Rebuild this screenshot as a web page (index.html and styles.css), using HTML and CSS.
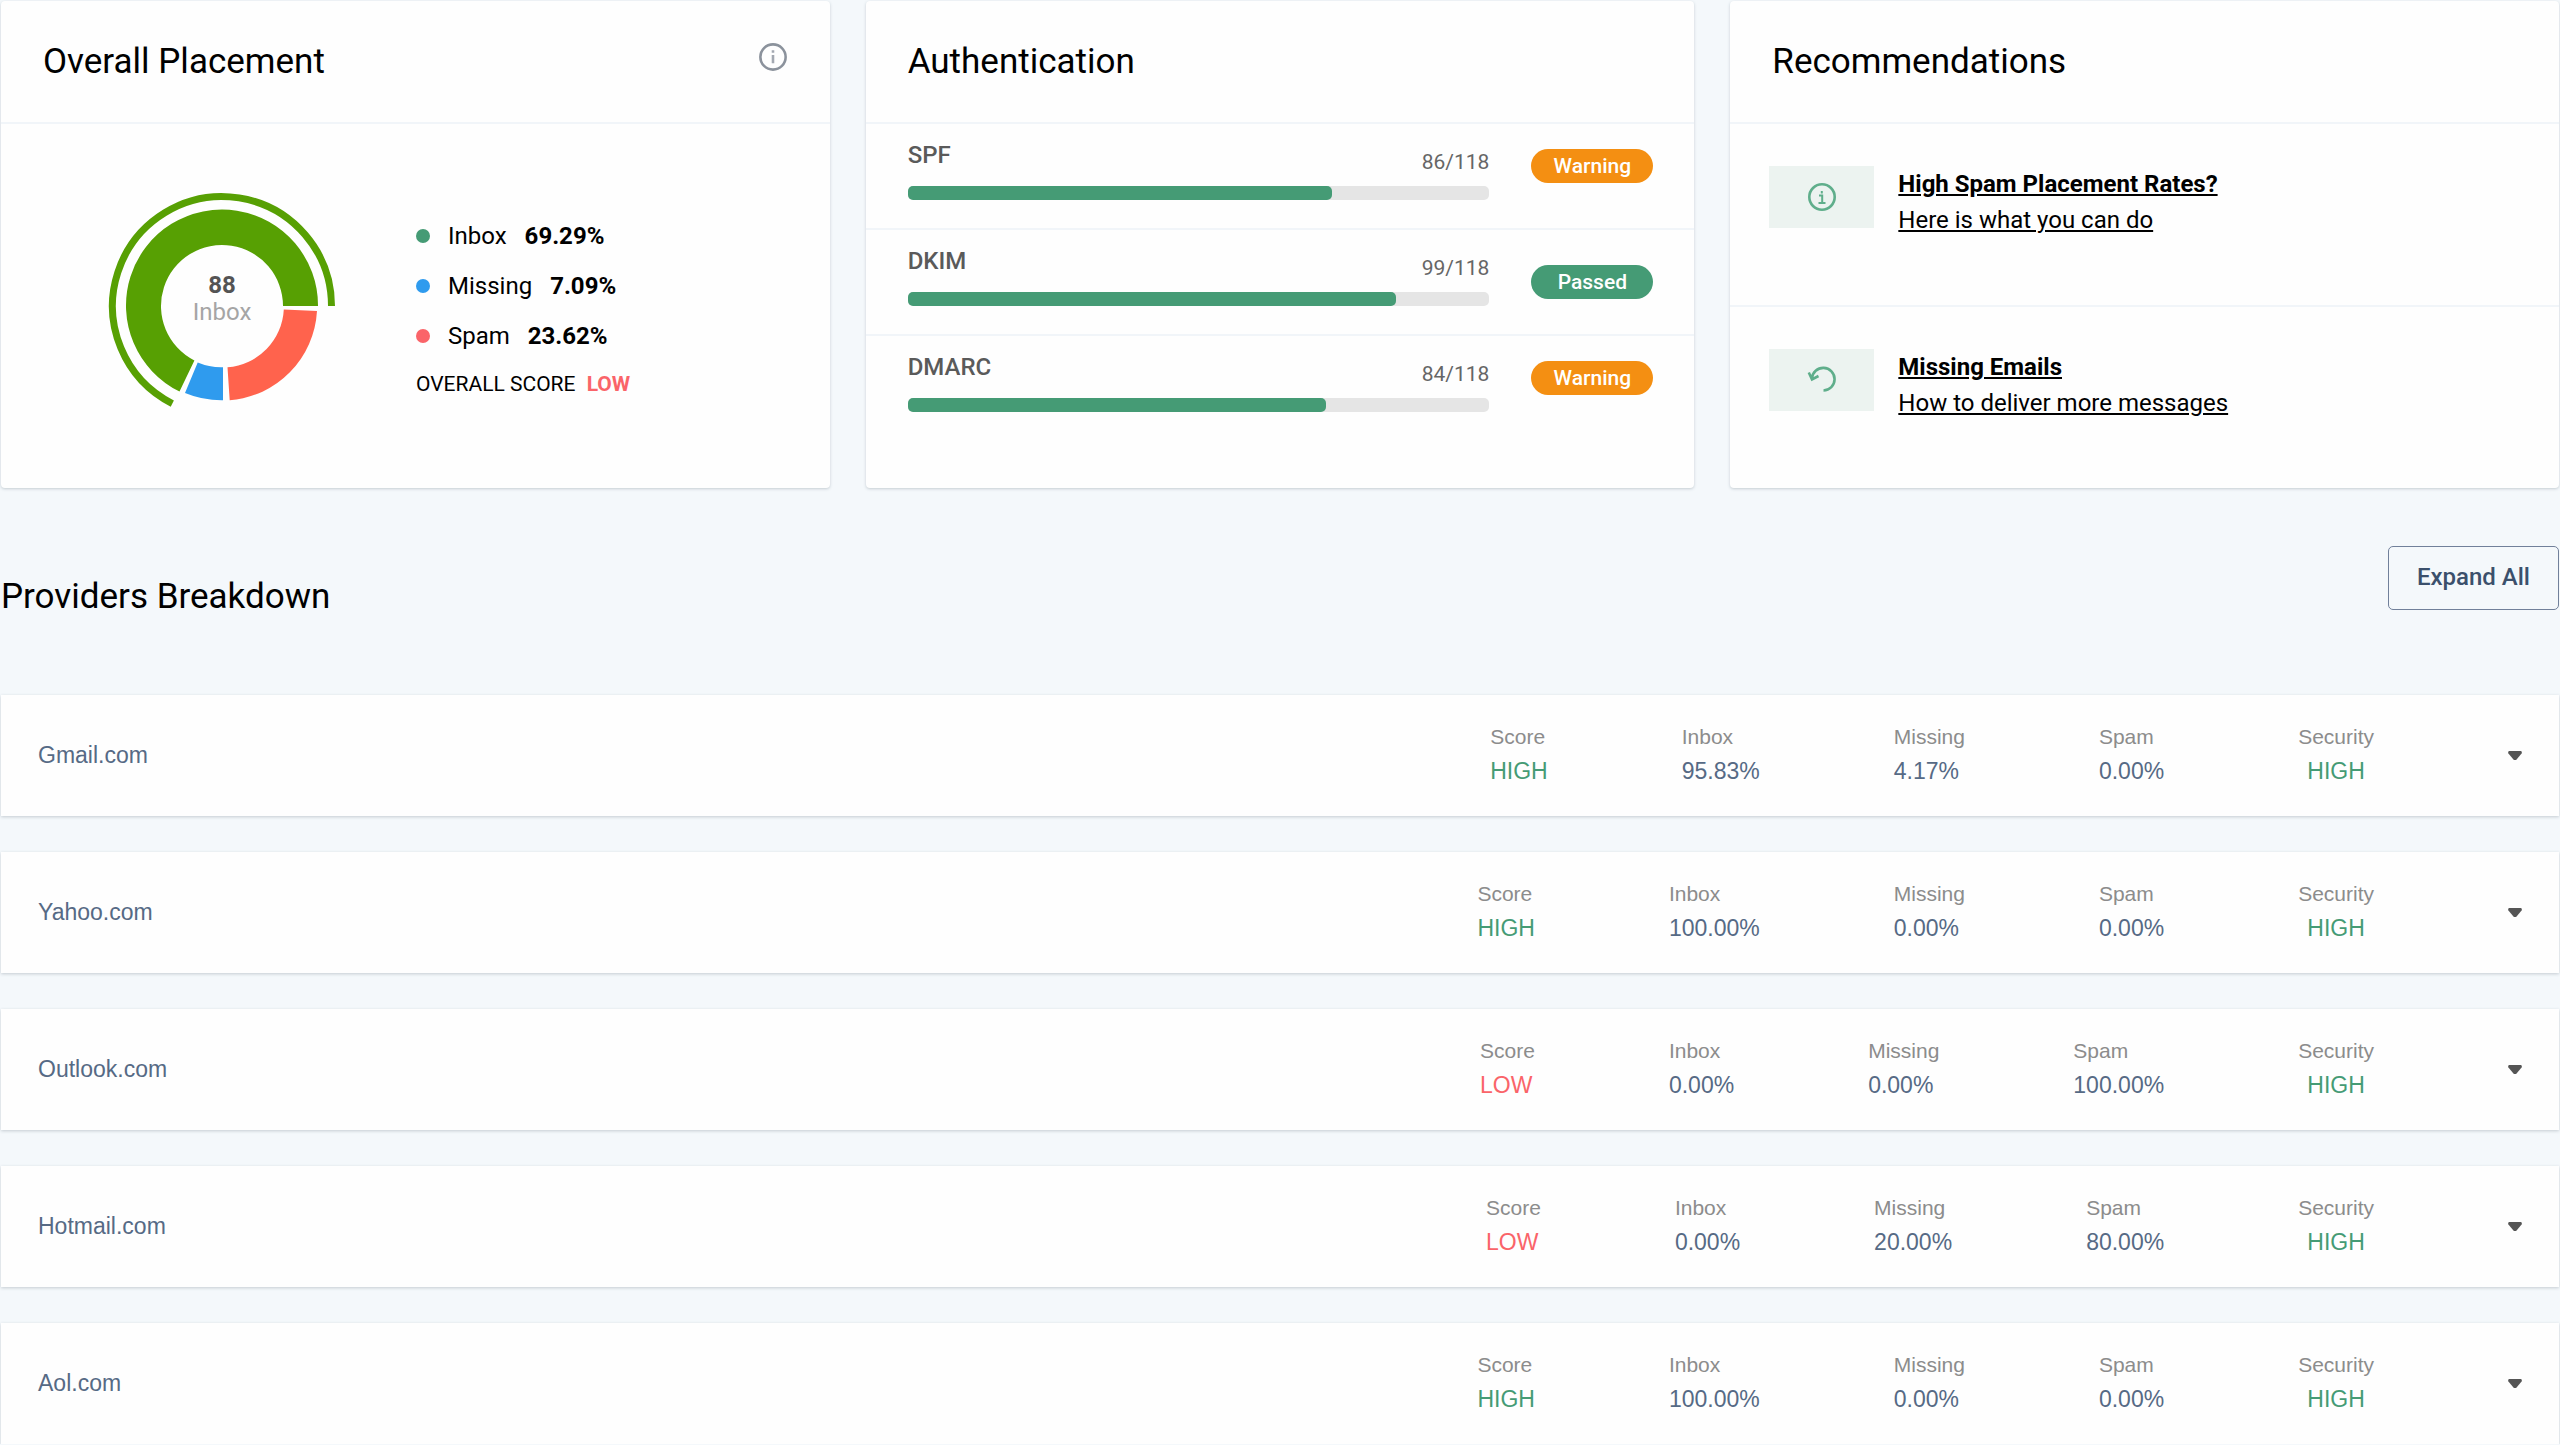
FILE: index.html
```
<!DOCTYPE html>
<html lang="en">
<head>
    <meta charset="UTF-8">
    <meta name="viewport" content="width=device-width, initial-scale=1.0">
    <title>Placement Report</title>
    <link rel="stylesheet" href="styles.css">
</head>
<body>
    <main class="page">
        <div class="cards">
            <section class="card">
                <div class="card-header">
                    <h2 class="title">Overall Placement</h2>
                    <button class="info-button" type="button" aria-label="About placement">
                        <svg class="info-icon" viewBox="0 0 28 28" fill="none" stroke="#8b929c" stroke-width="2.4">
                            <circle cx="14" cy="14" r="11.8"/>
                            <path stroke="#a3a8b1" d="M14 12.2v7.6M14 7.8v2.2"/>
                        </svg>
                    </button>
                </div>
                <div class="placement">
                    <!-- donut chart with outer ring on the inbox slice -->
                    <svg class="donut" viewBox="0 0 228 228">
                        <path fill="none" stroke="#57a003" stroke-width="7" d="M223.5 114A109.5 109.5 0 1 0 64.3 211.6"/>
                        <path fill="#57a003" d="M210 114A96 96 0 1 0 71.5 199.6L86.4 168.4A61 61 0 1 1 175 114Z"/>
                        <path fill="#ff634d" d="M209 119A95 95 0 0 1 121.7 208.3L119.5 175.3A61 61 0 0 0 175.8 117.5Z"/>
                        <path fill="#2f9bee" d="M115 208.3A95 95 0 0 1 77 201L89.7 170.6A61 61 0 0 0 115 175.3Z"/>
                        <text class="donut-value" x="114" y="101">88</text>
                        <text class="donut-label" x="114" y="128">Inbox</text>
                    </svg>
                    <div class="legend">
                        <div class="legend-item"><span class="dot green"></span>Inbox <b>69.29%</b></div>
                        <div class="legend-item"><span class="dot blue"></span>Missing <b>7.09%</b></div>
                        <div class="legend-item"><span class="dot red"></span>Spam <b>23.62%</b></div>
                        <div class="overall">OVERALL SCORE <b class="low">LOW</b></div>
                    </div>
                </div>
            </section>

            <section class="card">
                <div class="card-header">
                    <h2 class="title">Authentication</h2>
                </div>
                <div class="auth-row">
                    <div class="auth-main">
                        <div class="auth-text"><span class="auth-name">SPF</span><span class="auth-count">86/118</span></div>
                        <div class="bar"><div class="bar-fill" style="width: 73%"></div></div>
                    </div>
                    <span class="badge warning">Warning</span>
                </div>
                <div class="auth-row">
                    <div class="auth-main">
                        <div class="auth-text"><span class="auth-name">DKIM</span><span class="auth-count">99/118</span></div>
                        <div class="bar"><div class="bar-fill" style="width: 84%"></div></div>
                    </div>
                    <span class="badge passed">Passed</span>
                </div>
                <div class="auth-row">
                    <div class="auth-main">
                        <div class="auth-text"><span class="auth-name">DMARC</span><span class="auth-count">84/118</span></div>
                        <div class="bar"><div class="bar-fill" style="width: 72%"></div></div>
                    </div>
                    <span class="badge warning">Warning</span>
                </div>
            </section>

            <section class="card">
                <div class="card-header">
                    <h2 class="title">Recommendations</h2>
                </div>
                <div class="rec-row">
                    <div class="rec-icon">
                        <svg class="rec-svg" viewBox="0 0 30 30" fill="none" stroke="#5fae8b" stroke-width="2.6">
                            <circle cx="15" cy="15" r="12.7"/>
                            <path stroke-width="2" d="M12 13.5h3.2V21M11.5 21h7M14.8 9v2.5"/>
                        </svg>
                    </div>
                    <a class="rec-link" href="#"><b>High Spam Placement Rates?</b><span>Here is what you can do</span></a>
                </div>
                <div class="rec-row">
                    <div class="rec-icon">
                        <svg class="rec-svg" viewBox="0 0 30 30" fill="none" stroke="#5fae8b" stroke-width="2.6">
                            <path d="M5 13.5A11.3 11.3 0 1 1 16.5 25.5M1.8 7.5L5 14.5L11.5 11"/>
                        </svg>
                    </div>
                    <a class="rec-link" href="#"><b>Missing Emails</b><span>How to deliver more messages</span></a>
                </div>
            </section>
        </div>

        <div class="section-header">
            <h2 class="title">Providers Breakdown</h2>
            <button class="expand" type="button">Expand All</button>
        </div>

        <div class="providers">
            <div class="provider">
                <div class="provider-name">Gmail.com</div>
                <div class="stat score"><span>Score</span><strong class="high">HIGH</strong></div>
                <div class="stat inbox"><span>Inbox</span><strong>95.83%</strong></div>
                <div class="stat missing"><span>Missing</span><strong>4.17%</strong></div>
                <div class="stat spam"><span>Spam</span><strong>0.00%</strong></div>
                <div class="stat security"><span>Security</span><strong class="high">HIGH</strong></div>
                <button class="toggle" type="button" aria-label="Expand Gmail.com"></button>
            </div>
            <div class="provider">
                <div class="provider-name">Yahoo.com</div>
                <div class="stat score"><span>Score</span><strong class="high">HIGH</strong></div>
                <div class="stat inbox"><span>Inbox</span><strong>100.00%</strong></div>
                <div class="stat missing"><span>Missing</span><strong>0.00%</strong></div>
                <div class="stat spam"><span>Spam</span><strong>0.00%</strong></div>
                <div class="stat security"><span>Security</span><strong class="high">HIGH</strong></div>
                <button class="toggle" type="button" aria-label="Expand Yahoo.com"></button>
            </div>
            <div class="provider">
                <div class="provider-name">Outlook.com</div>
                <div class="stat score"><span>Score</span><strong class="low">LOW</strong></div>
                <div class="stat inbox"><span>Inbox</span><strong>0.00%</strong></div>
                <div class="stat missing"><span>Missing</span><strong>0.00%</strong></div>
                <div class="stat spam"><span>Spam</span><strong>100.00%</strong></div>
                <div class="stat security"><span>Security</span><strong class="high">HIGH</strong></div>
                <button class="toggle" type="button" aria-label="Expand Outlook.com"></button>
            </div>
            <div class="provider">
                <div class="provider-name">Hotmail.com</div>
                <div class="stat score"><span>Score</span><strong class="low">LOW</strong></div>
                <div class="stat inbox"><span>Inbox</span><strong>0.00%</strong></div>
                <div class="stat missing"><span>Missing</span><strong>20.00%</strong></div>
                <div class="stat spam"><span>Spam</span><strong>80.00%</strong></div>
                <div class="stat security"><span>Security</span><strong class="high">HIGH</strong></div>
                <button class="toggle" type="button" aria-label="Expand Hotmail.com"></button>
            </div>
            <div class="provider">
                <div class="provider-name">Aol.com</div>
                <div class="stat score"><span>Score</span><strong class="high">HIGH</strong></div>
                <div class="stat inbox"><span>Inbox</span><strong>100.00%</strong></div>
                <div class="stat missing"><span>Missing</span><strong>0.00%</strong></div>
                <div class="stat spam"><span>Spam</span><strong>0.00%</strong></div>
                <div class="stat security"><span>Security</span><strong class="high">HIGH</strong></div>
                <button class="toggle" type="button" aria-label="Expand Aol.com"></button>
            </div>
        </div>
    </main>
</body>
</html>
```
FILE: styles.css
```
* {
    box-sizing: border-box;
}
body {
    margin: 0;
    background-color: #f4f8fb;
    font-family: Roboto, "Liberation Sans", sans-serif;
    font-size: 24px;
    color: #000;
}
.page {
    padding: 1px 1px 0;
}
.title {
    margin: 0;
    font-size: 35px;
    font-weight: 400;
    line-height: 42px;
}
.cards {
    display: grid;
    grid-template-columns: repeat(3, 1fr);
    gap: 36px;
}
.card {
    min-height: 487px;
    background-color: #fefefe;
    border-radius: 4px;
    box-shadow: 0 1px 3px rgba(60,75,90,0.25);
}
.card-header {
    display: flex;
    justify-content: space-between;
    align-items: flex-start;
    height: 123px;
    padding: 40px 42px 0;
    border-bottom: 2px solid #f1f5f9;
}
.info-button {
    display: flex;
    padding: 1px 0;
    border: 0;
    background: none;
}
.info-icon {
    width: 30px;
    height: 30px;
}
.placement {
    display: flex;
    padding: 68px 42px 0 107px;
}
.donut {
    width: 228px;
    height: 228px;
    flex: none;
}
.donut-value,
.donut-label {
    text-anchor: middle;
    font-size: 24px;
    fill: #a5a5a5;
}
.donut-value {
    font-weight: 700;
    fill: #545454;
}
.legend {
    padding: 19px 0 0 80px;
}
.legend-item {
    display: flex;
    align-items: center;
    line-height: 50px;
}
.legend-item b {
    margin-left: 18px;
}
.dot {
    width: 14px;
    height: 14px;
    margin-right: 18px;
    border-radius: 50%;
}
.green {
    background-color: #459b75;
}
.blue {
    background-color: #2f9bee;
}
.red {
    background-color: #fa6469;
}
.overall {
    font-size: 21px;
    line-height: 46px;
}
.overall b {
    margin-left: 6px;
}
.auth-row {
    display: flex;
    height: 106px;
    padding: 16px 41px 0 42px;
    border-bottom: 2px solid #f1f5f9;
}
.auth-row:last-child {
    border-bottom: 0;
}
.auth-main {
    flex: 1;
}
.auth-text {
    display: flex;
    justify-content: space-between;
    height: 46px;
    line-height: 30px;
}
.auth-name {
    font-weight: 500;
    color: #5a5a5a;
}
.auth-count {
    padding-top: 7px;
    font-size: 21px;
    color: #666;
}
.bar {
    height: 14px;
    border-radius: 5px;
    background-color: #e5e5e5;
}
.bar-fill {
    height: 14px;
    border-radius: 5px;
    background-color: #459b75;
}
.badge {
    width: 122px;
    height: 34px;
    margin: 9px 0 0 42px;
    border-radius: 17px;
    font-size: 21px;
    font-weight: 500;
    line-height: 34px;
    text-align: center;
    color: #fff;
}
.warning {
    background-color: #f48f12;
}
.passed {
    margin-top: 19px;
    background-color: #459b75;
}
.rec-row {
    display: flex;
    height: 183px;
    padding: 42px 39px 0;
    border-bottom: 2px solid #f1f5f9;
}
.rec-row:last-child {
    height: 181px;
    border-bottom: 0;
}
.rec-icon {
    display: flex;
    align-items: center;
    justify-content: center;
    width: 105px;
    height: 62px;
    background-color: #ecf3f0;
}
.rec-svg {
    width: 30px;
    height: 30px;
}
.rec-link {
    display: flex;
    flex-direction: column;
    margin-left: 24px;
    line-height: 36px;
    color: #000;
}
.section-header {
    display: flex;
    align-items: flex-start;
    justify-content: space-between;
    height: 149px;
    margin-top: 58px;
}
.section-header .title {
    padding-top: 30px;
}
.expand {
    height: 64px;
    padding: 0 28px 2px;
    border: 1px solid #71809a;
    border-radius: 5px;
    background: none;
    font-family: inherit;
    font-size: 24px;
    font-weight: 500;
    color: #3b506c;
}
.providers {
    display: flex;
    flex-direction: column;
    gap: 36px;
}
.provider {
    display: flex;
    align-items: center;
    height: 121px;
    padding: 0 37px;
    background-color: #fefefe;
    box-shadow: 0 1px 3px rgba(60,75,90,0.25);
    font-family: "Liberation Sans", Arial, sans-serif;
    font-size: 23px;
    color: #566a85;
}
.provider-name {
    flex: 1;
}
.stat {
    display: flex;
    flex-direction: column;
    line-height: 35px;
    margin-right: 134px;
    padding-bottom: 4px;
}
.stat span {
    font-size: 21px;
    color: #8c8c8c;
}
.stat strong {
    font-weight: 400;
}
.security {
    align-items: center;
}
.high,
.stat .high {
    color: #459b75;
}
.low,
.stat .low {
    color: #fa6469;
}
.toggle {
    width: 14px;
    height: 9px;
    padding: 0;
    border: 0;
    background-color: #555;
    clip-path: polygon(5% 0, 95% 0, 100% 22%, 58% 100%, 42% 100%, 0 22%);
}
```
